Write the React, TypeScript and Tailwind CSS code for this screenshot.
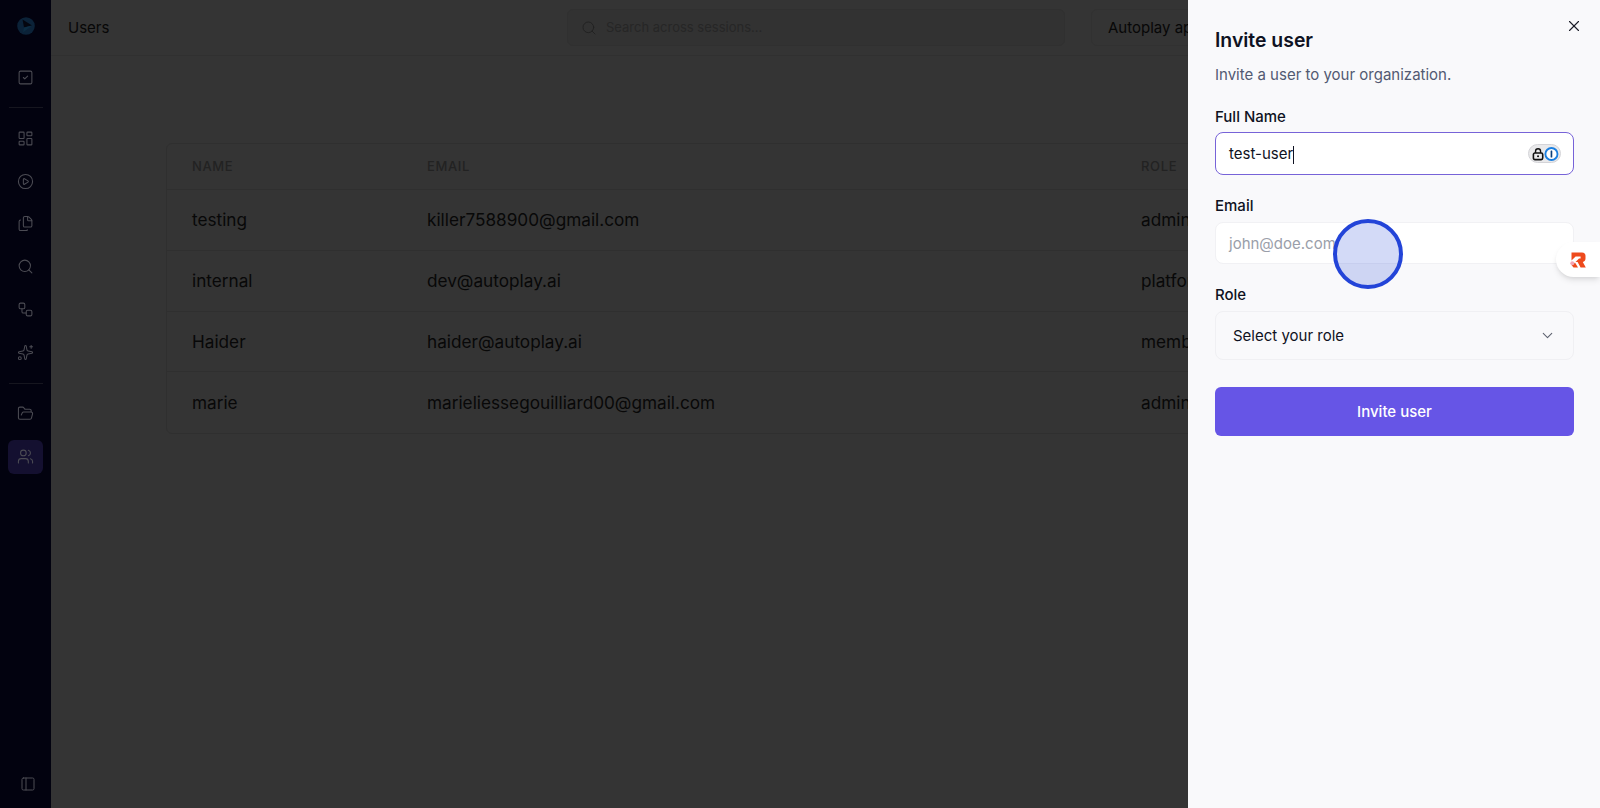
import { ChevronDown, CirclePlay, Files, FolderOpen, LayoutDashboard, PanelLeft, Search, Sparkles, SquareCheck, Users, Workflow, X } from 'lucide-react';

const USERS = [
  { name: 'testing', email: 'killer7588900@gmail.com', role: 'admin' },
  { name: 'internal', email: 'dev@autoplay.ai', role: 'platform' },
  { name: 'Haider', email: 'haider@autoplay.ai', role: 'member' },
  { name: 'marie', email: 'marieliessegouilliard00@gmail.com', role: 'admin' },
];

const NAV_TOP = [LayoutDashboard, CirclePlay, Files, Search, Workflow, Sparkles];

function Logo() {
  return (
    <svg width="18" height="18" viewBox="0 0 18 18">
      <circle cx="9" cy="9" r="8.8" fill="#0b2238" />
      <path d="M5.5 2.5 15 8.5 7 10.5Z" fill="#04060f" />
      <path d="M7 10.5 15 8.5 6 15.5Z" fill="#0c2c42" />
    </svg>
  );
}

function PasswordManagerBadge() {
  return (
    <span className="-mr-px flex h-[19px] w-[33px] items-center justify-between rounded-full border border-[#d4d4d8] bg-[#e9e9eb] pl-[3px] pr-[1px]">
      <svg width="13" height="14" viewBox="0 0 13 14" fill="none">
        <rect x="1.5" y="6" width="10" height="7" rx="1.6" fill="none" stroke="#111" strokeWidth="1.7" />
        <path d="M3.8 6V4a2.7 2.7 0 0 1 5.4 0v2" stroke="#111" strokeWidth="1.5" />
        <circle cx="6.5" cy="9.5" r="1.1" fill="#111" />
      </svg>
      <svg width="16" height="16" viewBox="0 0 16 16" fill="none">
        <circle cx="8" cy="8" r="6.5" fill="#fff" stroke="#1a7fe0" strokeWidth="2" />
        <rect x="7.1" y="4.2" width="1.8" height="7.6" rx="0.6" fill="#0b3f7a" />
      </svg>
    </span>
  );
}

function RecorderLogo() {
  return (
    <svg width="16" height="16" viewBox="0 0 16 16">
      <path
        d="M1.5 0.5H12Q15.5 0.5 15.5 4V6.5Q15.5 9.3 12.8 9.9L15.8 15.5H10.6L7.6 10H5.5L9 6.4H10.6V4.6H5.6L1.5 8.6Z"
        fill="#ee4a1c"
      />
      <path d="M5 10.5 8 15.5H3.5L1.5 13Z" fill="#ee4a1c" />
      <circle cx="2.3" cy="11.2" r="2" fill="#f3a6b4" />
    </svg>
  );
}

export default function App() {
  return (
    <div className="relative flex h-[808px] w-[1600px] overflow-hidden font-['Inter',sans-serif]">
      <aside className="flex w-[51px] shrink-0 flex-col items-center bg-[#02020f] text-[#4c4c54]">
        <div className="flex h-[52px] w-full items-center justify-center">
          <Logo />
        </div>
        <div className="flex h-[50px] items-center">
          <SquareCheck size={17} strokeWidth={1.5} />
        </div>
        <div className="mt-[5px] h-px w-[34px] bg-[#16161f]" />
        <div className="mt-[9px] flex flex-col items-center">
          {NAV_TOP.map((Icon, i) => (
            <div key={i} className="flex h-[42.8px] items-center">
              <Icon size={17} strokeWidth={1.5} />
            </div>
          ))}
        </div>
        <div className="mt-[9px] h-px w-[34px] bg-[#16161f]" />
        <div className="mt-[9px] flex h-[42px] items-center">
          <FolderOpen size={17} strokeWidth={1.5} />
        </div>
        <div className="mt-[5px] flex h-[34px] w-[35px] items-center justify-center rounded-md bg-[#141030]">
          <Users size={17} strokeWidth={1.5} />
        </div>
        <div className="mt-auto flex h-[48px] w-full items-center justify-center pl-[4px]">
          <PanelLeft size={16} strokeWidth={1.5} />
        </div>
      </aside>

      <main className="min-w-0 flex-1 overflow-hidden bg-[#343434]">
        <header className="flex h-[56px] w-[1200px] items-center border-b border-[#303030] pl-[17px]">
          <span className="w-[499px] pt-[2px] text-[15px] text-[#070707]">Users</span>
          <div className="flex h-[37px] w-[498px] items-center gap-[9px] rounded-md border border-[#303030] bg-[#323232] px-[13px]">
            <Search size={16} strokeWidth={1.5} className="text-[#222]" />
            <span className="text-[13px] text-[#262626]">Search across sessions...</span>
          </div>
          <div className="ml-[26px] flex h-[37px] items-center whitespace-nowrap rounded-md border border-[#313131] px-[16px] pt-[1px] text-[15px] text-[#070707]">
            Autoplay app
          </div>
        </header>

        <div className="ml-[115px] mt-[87px] w-[1200px] rounded-md border border-[#2f2f2f]">
          <div className="flex h-[46px] items-center border-b border-[#2f2f2f] pl-[25px] text-[13px] font-medium tracking-wider text-[#222]">
            <span className="w-[235px]">NAME</span>
            <span className="w-[714px]">EMAIL</span>
            <span>ROLE</span>
          </div>
          {USERS.map((user, i) => (
            <div
              key={user.email}
              className={`flex h-[60.8px] items-center pl-[25px] text-[17.2px] text-[#080808] ${i < USERS.length - 1 ? 'border-b border-[#2f2f2f]' : ''}`}
            >
              <span className="w-[235px]">{user.name}</span>
              <span className="w-[714px]">{user.email}</span>
              <span>{user.role}</span>
            </div>
          ))}
        </div>
      </main>

      <section className="flex w-[412px] shrink-0 flex-col bg-[#f9f9fb] pl-[27px] pr-[26px] pt-[26px]">
        <div className="flex items-start justify-between">
          <h2 className="text-[19.4px] font-semibold leading-7 text-[#0f1222]">Invite user</h2>
          <X size={18} strokeWidth={1.5} className="-mr-[9px] -mt-[9px] text-[#1a1c28]" />
        </div>
        <p className="mt-[10px] text-[15px] leading-[22px] text-[#525a72]">Invite a user to your organization.</p>

        <label className="mt-[20px] text-[15px] font-medium leading-[22px] text-[#0f1222]">Full Name</label>
        <div className="mt-[4px] flex h-[43px] items-center justify-between rounded-lg border-[1.5px] border-[#7763d8] bg-white px-[13px]">
          <span className="flex items-center pt-[2px] text-[15px] text-[#0f1222]">
            test-user
            <span className="h-[18px] w-px bg-[#0f1222]" />
          </span>
          <PasswordManagerBadge />
        </div>

        <label className="mt-[20px] text-[15px] font-medium leading-[22px] text-[#0f1222]">Email</label>
        <div className="mt-[5px] flex h-[42px] items-center rounded-lg border border-[#f1f1f4] bg-white px-[13px] pt-[2px] text-[15px] text-[#9a9ea9]">
          john@doe.com
        </div>

        <label className="mt-[20px] text-[15px] font-medium leading-[22px] text-[#0f1222]">Role</label>
        <div className="mt-[5px] flex h-[49px] items-center justify-between rounded-lg border border-[#f0f0f3] pl-[17px] pr-[17px] text-[15px] text-[#0f1222]">
          <span className="pt-[2px]">Select your role</span>
          <ChevronDown size={17} strokeWidth={1.5} className="text-[#5e6270]" />
        </div>

        <button className="mt-[27px] h-[49px] rounded-md bg-[#6655e6] pt-[2px] text-[15px] font-medium text-white">Invite user</button>
      </section>

      <div className="absolute left-[1333px] top-[219px] h-[70px] w-[70px] rounded-full border-[4px] border-[#2344d8] bg-[#2344d8]/20" />
      <div className="absolute right-0 top-[242px] flex h-[35px] w-[44px] items-center rounded-l-full bg-white pl-[14px] shadow-md">
        <RecorderLogo />
      </div>
    </div>
  );
}
